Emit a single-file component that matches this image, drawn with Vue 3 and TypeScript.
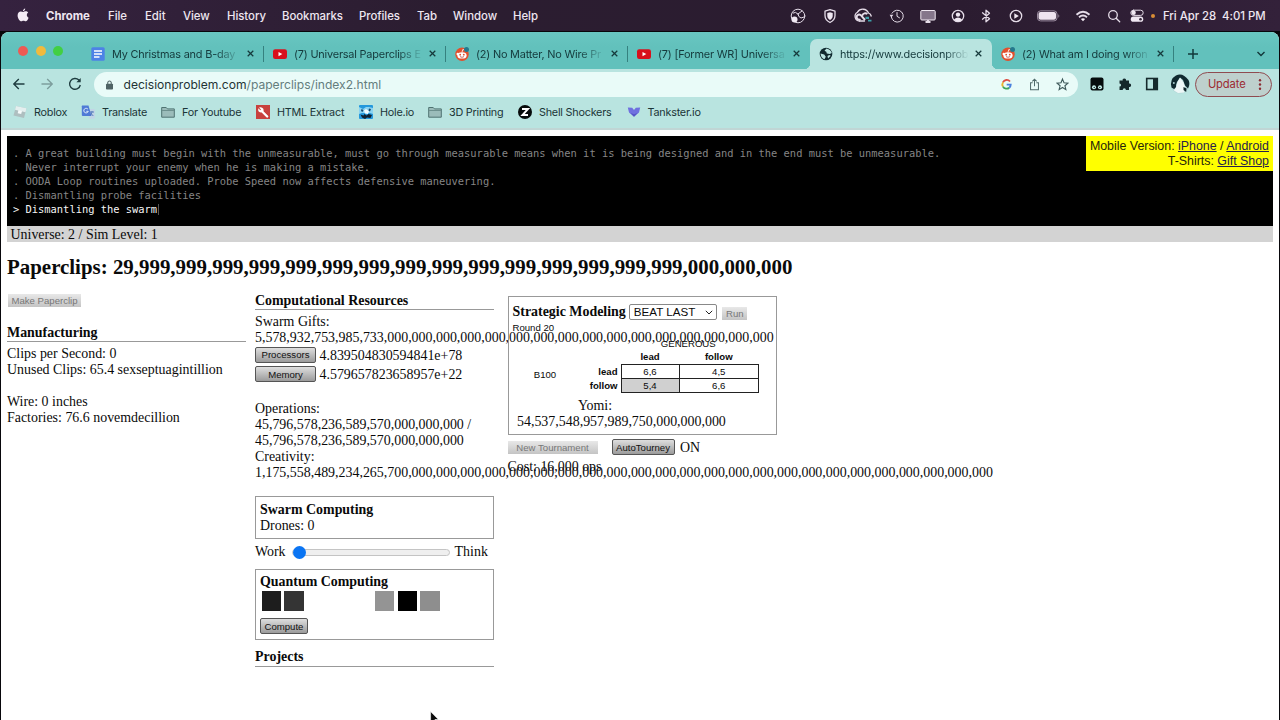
<script setup lang="ts">
interface Tab { icon: 'docs' | 'youtube' | 'reddit' | 'globe'; title: string; active?: boolean }
interface Bookmark { icon: string; label: string; cls: string }

const menus: string[] = ['Chrome', 'File', 'Edit', 'View', 'History', 'Bookmarks', 'Profiles', 'Tab', 'Window', 'Help']

const tabs: Tab[] = [
  { icon: 'docs', title: 'My Christmas and B-day' },
  { icon: 'youtube', title: '(7) Universal Paperclips E' },
  { icon: 'reddit', title: '(2) No Matter, No Wire Pr' },
  { icon: 'youtube', title: '(7) [Former WR] Universa' },
  { icon: 'globe', title: 'https://www.decisionprob', active: true },
  { icon: 'reddit', title: '(2) What am I doing wron' },
]

const bookmarks: Bookmark[] = [
  { icon: 'roblox', label: 'Roblox', cls: 'b1' },
  { icon: 'translate', label: 'Translate', cls: 'b2' },
  { icon: 'folder', label: 'For Youtube', cls: 'b3' },
  { icon: 'wrench', label: 'HTML Extract', cls: 'b4' },
  { icon: 'hole', label: 'Hole.io', cls: 'b5' },
  { icon: 'folder', label: '3D Printing', cls: 'b6' },
  { icon: 'zed', label: 'Shell Shockers', cls: 'b7' },
  { icon: 'tank', label: 'Tankster.io', cls: 'b8' },
]

const log: string[] = [
  'A great building must begin with the unmeasurable, must go through measurable means when it is being designed and in the end must be unmeasurable.',
  'Never interrupt your enemy when he is making a mistake.',
  'OODA Loop routines uploaded. Probe Speed now affects defensive maneuvering.',
  'Dismantling probe facilities',
]

const clips = '29' + ',999'.repeat(15) + ',000'.repeat(3)
const gifts = '5,578,932,753,985,733' + ',000'.repeat(16)
const creativity = '1,175,558,489,234,265,700' + ',000'.repeat(24)
const ops = '45,796,578,236,589,570,000,000,000'
const chips: string[] = ['c1', 'c2', 'blank', 'blank', 'blank', 'c3', 'c4', 'c5']
</script>

<template>
  <div class="screen">
    <header class="menubar">
      <svg class="apple" viewBox="0 0 12 14"><path d="M8.2 0.4C8.3 1.7 7.2 3 6 3 5.900 1.700 7 .6 8.200.4zM6.200 3.900C6.900 3.900 7.600 3.300 8.700 3.300c1 0 1.900.5 2.500 1.300-2 1.200-1.700 4.200.4 5.100C11 11.500 9.900 13.200 8.700 13.200c-.9 0-1.200-.5-2.200-.5s-1.400.5-2.200.5C2.700 13.200.6 10.200.6 7.400c0-2.600 1.600-4 3.200-4 1 0 1.800.5 2.400.5z" /></svg>
      <nav class="menus"><span v-for="m in menus" :key="m" :class="{ app: m === 'Chrome' }">{{ m }}</span></nav>
      <div class="status">
        <svg viewBox="0 0 16 16"><circle cx="8" cy="8" r="6.800" class="ln" /><path class="ln" d="M3 5q2.500-2 5 1M8 6l4-3M8 6q0 3 3 4l3-1" /><circle cx="4.500" cy="11.500" r="3" fill="#f0e8f2" /></svg>
        <svg viewBox="0 0 16 16"><path class="ln thick" d="M8 1.600l5 1.600v4.300c0 3.200-2 5.500-5 7-3-1.500-5-3.800-5-7V3.200z" /><path fill="#f0e8f2" d="M8 4.200l2.700.8v3c0 1.600-1.100 3-2.700 4-1.600-1-2.700-2.400-2.700-4V5z" /></svg>
        <svg class="wide" viewBox="0 0 20 16"><path class="ln thick" d="M6.500 13A4.700 4.700 0 0 1 4.500 4.200 6.200 6.200 0 0 1 15.500 5a4 4 0 0 1 2.700 3" /><path class="ln fat" d="M12 12L7.800 7.200a2.500 2.500 0 1 0-.3 4M9.300 7.500a3 3 0 0 1 5-1.300" /><path class="ln thick" d="M6.500 13h5" /><path d="M12.500 8.800h3.500v2.200h-3.500zM15 11.700h3.500v1.800H15z" fill="#3e9fa9" /></svg>
        <svg viewBox="0 0 16 16"><path class="ln" d="M3 5.200A6 6 0 1 1 2.300 9M8 4.500V8.300l2.500 1.500" /><path d="M.6 6.800h3.800L2.300 9.500z" fill="#e5d9e8" /></svg>
        <svg viewBox="0 0 16 16"><rect x=".8" y="2.500" width="14.400" height="9.500" rx="1" fill="#85768b" stroke="#f0e8f2" /><path d="M5.500 14h5M8 12v2" class="ln fat" /></svg>
        <svg viewBox="0 0 16 16"><circle cx="8" cy="8" r="5.700" class="ln thick" /><circle cx="8" cy="6.600" r="2.200" fill="#f0e8f2" /><path fill="#f0e8f2" d="M4 11.500q4-4 8 0-1.500 2-4 2t-4-2z" /></svg>
        <svg viewBox="0 0 16 16"><path class="ln thick" d="M4.500 4.800l7 6L8 13.800V2.200l3.500 3-7 6" /></svg>
        <svg viewBox="0 0 16 16"><circle cx="8" cy="8" r="5.700" class="ln thick" /><path fill="#f0e8f2" d="M6.300 5.200L10.800 8 6.300 10.800z" /></svg>
        <svg class="batt" viewBox="0 0 23 12"><rect x=".5" y=".9" width="19.500" height="10" rx="3" fill="none" stroke="#9b8ca0" /><rect x="1.500" y="2" width="17.500" height="7.800" rx="2" fill="#eee3ef" /><path d="M21.300 4.300v3.400q1-.5 1-1.700t-1-1.700z" fill="#8e8093" /></svg>
        <svg viewBox="0 0 16 16"><path class="ln fat" d="M1.500 6.700Q8 1 14.500 6.700M4 9.200Q8 6 12 9.200" /><path fill="#f5edf6" d="M5.900 11.100q2.100-1.500 4.200 0L8 13.300z" /></svg>
        <svg viewBox="0 0 16 16"><circle cx="7" cy="7" r="4.300" class="ln thick" /><path class="ln thick" d="M10.200 10.200l3.500 3.500" /></svg>
        <svg viewBox="0 0 16 16"><rect x="1.800" y="2.200" width="12.400" height="5.200" rx="2.600" class="ln" /><circle cx="4.600" cy="4.800" r="2.200" fill="#f0e8f2" /><rect x="1.800" y="8.600" width="12.400" height="5.200" rx="2.600" fill="#f0e8f2" /><circle cx="11.500" cy="11.200" r="1.300" fill="#35263b" /></svg>
        <i class="dot"></i>
        <span class="clock">Fri Apr 28&nbsp; 4:01 PM</span>
      </div>
    </header>

    <div class="window">
      <div class="tabstrip">
        <div class="lights"><i></i><i></i><i></i></div>
        <div v-for="t in tabs" :key="t.title" class="tab" :class="{ active: t.active }">
          <svg v-if="t.icon === 'docs'" class="fav" viewBox="0 0 14 14"><rect x=".3" y=".3" width="13.400" height="13.400" rx="1.500" fill="#4d82e6" /><path d="M3 4h8M3 7h8M3 10h5.500" stroke="#fff" stroke-width="1.500" /></svg>
          <svg v-else-if="t.icon === 'youtube'" class="fav" viewBox="0 0 14 14"><rect y="2.200" width="14" height="9.800" rx="2.200" fill="#d8101c" /><path d="M5.500 4.900v4.400L9.300 7.100z" fill="#fff" /></svg>
          <svg v-else-if="t.icon === 'reddit'" class="fav" viewBox="0 0 14 14"><circle cx="7" cy="7.200" r="6.700" fill="#e2502d" /><ellipse cx="7" cy="8.400" rx="4.600" ry="3.200" fill="#fff" /><circle cx="2.700" cy="7" r="1.200" fill="#fff" /><path d="M7 5.200L7.800 2.500l2 .5" stroke="#fff" stroke-width=".8" fill="none" /><circle cx="5.200" cy="7.700" r=".9" fill="#e2502d" /><circle cx="8.800" cy="7.700" r=".9" fill="#e2502d" /><path d="M5 9.600q2 1.400 4 0" stroke="#a33" stroke-width=".7" fill="none" /><circle cx="11.500" cy="2.500" r="2.500" fill="#24798d" /></svg>
          <svg v-else class="fav" viewBox="0 0 14 14"><circle cx="7" cy="7" r="6.300" fill="#10292e" /><path d="M1.500 6.500l3.700 1 1.600 2.200-1.300 2.500Q2 11 1.500 6.500zM7.500 1.500l-2 2.300 1.800 1 .5 1.800 3 .3 2-.8Q12 2.500 7.500 1.500zM9 11.500l2.800-2.700-1.500-.8-1.800 1z" fill="#b9e4e0" /></svg>
          <span class="title">{{ t.title }}</span>
          <svg class="x" viewBox="0 0 8 8"><path d="M.8.8l6.400 6.400M7.200.8L.8 7.200" /></svg>
        </div>
        <svg class="plus" viewBox="0 0 12 12"><path d="M6 1v10M1 6h10" /></svg>
        <svg class="chev" viewBox="0 0 10 6"><path d="M1.500 1L5 4.500 8.500 1" /></svg>
      </div>

      <div class="toolbar">
        <svg class="nav" viewBox="0 0 14 14"><path d="M12.500 7H2M6.800 2L1.800 7l5 5" /></svg>
        <svg class="nav dim" viewBox="0 0 14 14"><path d="M1.500 7H12M7.200 2l5 5-5 5" /></svg>
        <svg class="nav" viewBox="0 0 14 14"><path d="M12.300 8A5.400 5.400 0 1 1 10.900 3.100L12 4.200" /><path d="M12.700 1v4.300H8.400z" fill="#1f3d40" stroke="none" /></svg>
        <div class="omnibox">
          <svg class="lock" viewBox="0 0 8 11"><rect y="4" width="8" height="6.500" rx="1" fill="#4f6365" /><path d="M2 4.500V3a2 2 0 0 1 4 0v1.500" fill="none" stroke="#4f6365" stroke-width="1.200" /></svg>
          <span class="url">decisionproblem.com<em>/paperclips/index2.html</em></span>
          <svg class="g" viewBox="0 0 12 12"><g fill="none" stroke-width="2"><path d="M9.800 2.700A4.600 4.600 0 0 0 2.100 3.700" stroke="#dd4f43" /><path d="M2.100 3.700a4.600 4.600 0 0 0 0 4.600" stroke="#e9b42d" /><path d="M2.100 8.300A4.600 4.600 0 0 0 9 9.500" stroke="#3fa45b" /><path d="M9 9.500A4.500 4.500 0 0 0 10.600 6.200H6.200" stroke="#4a80dd" /></g></svg>
          <svg class="share" viewBox="0 0 12 14"><path d="M4 5H1.700v7.800h8.600V5H8M6 9V1.200M3.600 3.500L6 1.200l2.400 2.300" /></svg>
          <svg class="star" viewBox="0 0 14 14"><path d="M7 1.200l1.600 4 4.200.3-3.200 2.800 1 4.200L7 10.200l-3.600 2.300 1-4.200L1.200 5.500l4.200-.3z" /></svg>
        </div>
        <svg class="ext first" viewBox="0 0 14 14"><rect x=".5" y=".5" width="13" height="13" rx="2" fill="#060c0d" /><circle cx="4" cy="10.200" r="2" fill="#c6eeea" /><circle cx="10" cy="10.200" r="2" fill="#c6eeea" /><circle cx="4.200" cy="10.500" r=".7" fill="#101c1e" /><circle cx="9.800" cy="10.500" r=".7" fill="#101c1e" /></svg>
        <svg class="ext" viewBox="0 0 14 14"><path fill="#14282b" d="M1.500 3.500h3.200a1.700 1.700 0 1 1 3.300 0h3V6.600a1.700 1.700 0 1 1 0 3.300v3H7.900a1.600 1.600 0 1 0-3.200 0H1.500V9.600a1.600 1.600 0 1 0 0-3.200z" /></svg>
        <svg class="ext" viewBox="0 0 14 14"><rect x="1.700" y="1.500" width="10.600" height="11" fill="none" stroke="#162a2d" stroke-width="1.600" /><path d="M8 1.500h4.300v11H8z" fill="#162a2d" /></svg>
        <svg class="avatar" viewBox="0 0 20 20"><circle cx="10" cy="10" r="9.500" fill="#b4d8d8" /><path d="M1.500 13.500Q-.5 5 6 1.500T18.500 6q2 4-.5 8.500l-3-3L13 6l-3-2.500L7 8l-1 3 .3 2.500L4 15z" fill="#102a30" /><path d="M10 3.800l3.500 4.700 1.500 4.500-1 5.500-6 .5-4-2.500 2.500-4.500L7.500 8z" fill="#edf7f7" /><path d="M13.500 13l3 1.500-.3 3.500-2.700-2z" fill="#10262b" /><circle cx="3.800" cy="9" r="1" fill="#a9cfd0" /></svg>
        <div class="update"><span>Update</span><svg viewBox="0 0 4 14"><circle cx="2" cy="2.500" r="1.300" /><circle cx="2" cy="7" r="1.300" /><circle cx="2" cy="11.500" r="1.300" /></svg></div>
      </div>

      <div class="bookmarks">
        <div v-for="b in bookmarks" :key="b.label" class="bm" :class="b.cls">
          <svg v-if="b.icon === 'roblox'" viewBox="0 0 14 14"><path d="M3 1l10.500 2.300L11 13 .5 10.500z" fill="#aebfc0" /><path d="M3 1l10.500 2.300-1 4L2 4.800z" fill="#e4efef" /><path d="M5.500 5l3.500 1-.8 3-3.500-.8z" fill="#f6fbfb" /></svg>
          <svg v-else-if="b.icon === 'translate'" viewBox="0 0 14 14"><path d="M6 4h7q.8 0 .8.800V13q0 .8-.8.800H8.500z" fill="#c2d5e6" /><path d="M1 .5h6.500L10.500 11H1.800Q.8 11 .8 10V1.300z" fill="#4f7ad6" /><path d="M7 4.300a2.300 2.300 0 1 0 .3 2H5.300" stroke="#dce9fa" fill="none" /><path d="M9 7h4M11 6v1q-.5 2.500-2 3.500M10 8.500l2.300 2.500" stroke="#5176b9" stroke-width=".9" fill="none" /></svg>
          <svg v-else-if="b.icon === 'folder'" viewBox="0 0 14 14"><path d="M.7 2.500h4.500l1.300 1.400h6.800v8.300H.7z" fill="#9bbcba" stroke="#4f7372" /><path d="M1 5.500h12" stroke="#6d908e" /></svg>
          <svg v-else-if="b.icon === 'wrench'" viewBox="0 0 14 14"><rect width="14" height="14" fill="#c8413e" /><path d="M6.200 6.500l5 5" stroke="#fff" stroke-width="2.300" stroke-linecap="round" /><path d="M3 2.500l2 2-.7.800-2-2Q1.500 7 4.800 7.400 8.600 7 7.300 3.700 5.800 1.400 3 2.500z" fill="#fff" /></svg>
          <svg v-else-if="b.icon === 'hole'" viewBox="0 0 14 14"><rect width="14" height="14" rx="1" fill="#2498dc" /><path d="M0 2l4 2 3-2h3l4 1v6l-3-1-8 0-3 1z" fill="#8ad4f3" /><path d="M1.500 9.500l3 1 1-1.500 2 1.500 2-1.500 3.500 1-1.500 3-3.500-.5-2 1.500-3-1.500z" fill="#102233" /><path d="M5 5.500l2-1.500 3 2-1 3-3-.5z" fill="#f2fbff" /><path d="M2.500 4l2 1-1 2-1.500-1zM10 3.500l2 .5-1 2.500-1.500-1z" fill="#1a4a70" /></svg>
          <svg v-else-if="b.icon === 'zed'" viewBox="0 0 14 14"><circle cx="7" cy="7" r="7" fill="#070b0b" /><path d="M4 4h6L4.500 10H10" stroke="#fff" stroke-width="1.900" fill="none" /></svg>
          <svg v-else viewBox="0 0 14 14"><path d="M.8 2.500l4.400.3L7 5l1.800-2.200 4.400-.3L12 7.500 7 11.800 2 7.500z" fill="#6f70df" /><path d="M3.500 8L7 9.300 10.500 8 7 11.800z" fill="#5655c4" /></svg>
          <span>{{ b.label }}</span>
        </div>
      </div>

      <main class="page">
        <section class="console">
          <div class="log">
            <p v-for="l in log" :key="l">. {{ l }}</p>
            <p class="now">&gt; Dismantling the swarm<i></i></p>
          </div>
          <div class="links">Mobile Version: <u>iPhone</u> / <u>Android</u><br />T-Shirts: <u>Gift Shop</u></div>
        </section>
        <div class="universe">Universe: 2 / Sim Level: 1</div>
        <h1>Paperclips: {{ clips }}</h1>
        <div class="cols">
          <section class="left">
            <button class="btn off make">Make Paperclip</button>
            <h2>Manufacturing</h2>
            <p>Clips per Second: 0</p>
            <p>Unused Clips: 65.4 sexseptuagintillion</p>
            <p>&nbsp;</p>
            <p>Wire: 0 inches</p>
            <p>Factories: 76.6 novemdecillion</p>
          </section>
          <section class="mid">
            <h2>Computational Resources</h2>
            <p>Swarm Gifts:</p>
            <p>{{ gifts }}</p>
            <div class="row"><button class="btn">Processors</button><span>4.839504830594841e+78</span></div>
            <div class="row"><button class="btn">Memory</button><span>4.579657823658957e+22</span></div>
            <div class="ops">
              <p>Operations:</p>
              <p>{{ ops }} /</p>
              <p>{{ ops }}</p>
              <p>Creativity:</p>
              <p>{{ creativity }}</p>
            </div>
            <div class="box swarm"><h3>Swarm Computing</h3><p>Drones: 0</p></div>
            <div class="slider"><span>Work</span><div class="track"><i></i></div><span>Think</span></div>
            <div class="box quantum">
              <h3>Quantum Computing</h3>
              <div class="chips"><i v-for="(c, i) in chips" :key="i" :class="c"></i></div>
              <button class="btn compute">Compute</button>
            </div>
            <h2 class="projects">Projects</h2>
          </section>
          <section class="right">
            <div class="box model">
              <div class="pick">
                <h3>Strategic Modeling</h3>
                <div class="select"><span>BEAT LAST</span><svg viewBox="0 0 8 5"><path d="M.8.8L4 4 7.200.8" /></svg></div>
                <button class="btn off run">Run</button>
              </div>
              <div class="round">Round 20</div>
              <div class="payoff">
                <span class="b100">B100</span>
                <div class="grid">
                  <span class="gen">GENEROUS</span>
                  <i></i><b>lead</b><b>follow</b>
                  <b class="side">lead</b><span class="cell">6,6</span><span class="cell">4,5</span>
                  <b class="side">follow</b><span class="cell hit">5,4</span><span class="cell">6,6</span>
                </div>
              </div>
              <p class="yomi">Yomi:</p>
              <p class="yomi-n">54,537,548,957,989,750,000,000,000</p>
            </div>
            <div class="tourney"><button class="btn off new">New Tournament</button><button class="btn auto">AutoTourney</button><span>ON</span></div>
            <p class="cost">Cost: 16,000 ops</p>
          </section>
        </div>
      </main>
    </div>
    <svg class="cursor" viewBox="0 0 9 13"><path d="M.6.6v10.800l2.500-2.300 1.700 3.700 1.700-.8-1.600-3.500h3.500z" fill="#0a0a0a" stroke="#fff" stroke-width=".6" /></svg>
  </div>
</template>

<style>
html, body { margin: 0; background: #150d1b; overflow: hidden; }
</style>

<style scoped>
.screen { position: relative; width: 1280px; height: 720px; overflow: hidden; background: #08070b; font-family: Inter, Roboto, sans-serif; }
.screen * { box-sizing: border-box; }
svg { display: block; flex: none; overflow: visible; }
p, h1, h2, h3 { margin: 0; white-space: nowrap; }
.menubar { display: flex; align-items: center; height: 31px; background: linear-gradient(90deg, #35223f, #2b1d30 35%, #2b1c30 75%, #33213a); color: #eee6f0; }
.apple { width: 12px; height: 14px; margin: 0 0 1px 17px; fill: #f4ecf5; }
.menus { display: grid; grid-template-columns: 62px 37px 38px 44px 55px 77px 58px 36px 60px 40px; margin-left: 17px; font-size: 11.400px; letter-spacing: -.05px; font-weight: 500; white-space: nowrap; }
.menus .app { font-weight: 700; }
.status { display: grid; grid-template-columns: 32px 32px 34px 33px 30px 29px 28px 31px 35px 34px 27px 20px 7px auto; align-items: center; justify-items: center; margin-left: 229px; }
.status svg { width: 16px; height: 16px; }
.status .wide { width: 20px; }
.status .batt { width: 23px; height: 12px; }
.ln { fill: none; stroke: #e5dce8; stroke-width: 1; stroke-linecap: round; stroke-linejoin: round; }
.thick { stroke-width: 1.300; }
.fat { stroke-width: 1.900; stroke-linecap: butt; }
.dot { width: 4px; height: 4px; border-radius: 50%; background: #d98d35; margin-left: 4px; }
.clock { font-size: 11.400px; font-weight: 500; margin-left: 9px; white-space: nowrap; letter-spacing: -.05px; }

.window { width: 1278px; height: 688px; margin: 1px 0 0 1px; border-radius: 8px 8px 0 0; overflow: hidden; background: #fff; }
.tabstrip { display: flex; height: 37px; padding-top: 7px; background: linear-gradient(#69c7c1, #62c1bc 40%); }
.lights { display: flex; gap: 7.500px; width: 80.500px; padding: 7px 0 0 17px; }
.lights i { width: 10px; height: 10px; border-radius: 50%; background: #ed5a54; }
.lights i:nth-child(2) { background: #f0ba3d; }
.lights i:nth-child(3) { background: #42cf43; }
.tab { display: flex; align-items: center; position: relative; width: 182px; height: 30px; padding: 0 9px 1px 9.500px; }
.tab:not(.active)::after { content: ''; position: absolute; right: 0; top: 7px; height: 16px; width: 1px; background: #35817f; }
.tab:nth-child(5)::after { display: none; }
.active { background: #b9e4e0; border-radius: 7px 7px 0 0; }
.active::before { content: ''; position: absolute; left: -6px; right: -6px; bottom: 0; height: 6px; background: radial-gradient(circle at 0 0, transparent 6px, #b9e4e0 6.500px) left / 6px 6px no-repeat, radial-gradient(circle at 100% 0, transparent 6px, #b9e4e0 6.500px) right / 6px 6px no-repeat; }
.fav { width: 14px; height: 14px; }
.title { width: 128px; margin-left: 7px; white-space: nowrap; font-size: 10.900px; letter-spacing: -.19px; line-height: 18px; color: #14393b; -webkit-mask-image: linear-gradient(90deg, #000 104px, transparent 129px); mask-image: linear-gradient(90deg, #000 104px, transparent 129px); }
.x { width: 7px; height: 7px; margin-left: 6.500px; fill: none; stroke: #163a3c; stroke-width: 1.400; }
.plus { width: 12px; height: 12px; margin: 9px 0 0 13px; fill: none; stroke: #12383a; stroke-width: 1.500; }
.chev { width: 10px; height: 6px; margin: 12px 0 0 57px; fill: none; stroke: #12383a; stroke-width: 1.400; }
.toolbar { display: flex; align-items: center; height: 30px; padding-left: 11px; background: #b9e4e0; }
.nav { width: 14px; height: 14px; margin-right: 14px; fill: none; stroke: #1f3d40; stroke-width: 1.400; }
.dim { stroke: #7d9e9d; }
.omnibox { display: flex; align-items: center; width: 984px; height: 25px; margin: 1px 0 0 -2px; padding-left: 12px; border-radius: 13px; background: #e9fbf8; }
.lock { width: 7px; height: 10px; }
.url { width: 882px; margin-left: 10.500px; font-size: 12.080px; color: #1f3335; }
.url em { font-style: normal; color: #647d7d; }
.g { width: 11px; height: 11px; margin-right: 17px; margin-left: -5px; }
.share { width: 11px; height: 13px; margin-right: 16px; fill: none; stroke: #506a6a; stroke-width: 1.100; }
.star { width: 13px; height: 13px; fill: none; stroke: #3e595a; stroke-width: 1.200; }
.ext { width: 14px; height: 14px; margin: 0 0 0 13.700px; }
.ext.first { margin-left: 12px; }
.avatar { width: 20px; height: 20px; margin-left: 11px; }
.update { display: flex; align-items: center; width: 77px; height: 25px; margin-left: 5px; padding-left: 11.500px; border: 1px solid #8f4b50; border-radius: 13px; background: #bed0cd; color: #9c2a32; font-size: 11.200px; letter-spacing: -.1px; }
.update span { width: 47px; }
.update svg { width: 4px; height: 13px; margin-left: 3.500px; fill: #8b2d34; }
.bookmarks { display: flex; height: 31px; padding: 0 0 3px 12px; background: #b9e4e0; border-bottom: 2px solid #c0d6d5; }
.bm { display: flex; align-items: center; gap: 7px; font-size: 10.800px; letter-spacing: -.22px; color: #1b3537; white-space: nowrap; }
.bm svg { width: 14px; height: 14px; }
.b1 { width: 68px; } .b2 { width: 80px; } .b3 { width: 95px; } .b4 { width: 103px; } .b5 { width: 69px; } .b6 { width: 90px; } .b7 { width: 108.500px; }

.page { height: 590px; padding: 6px 6px 0 6px; background: #fff; color: #0a0a0a; font: 13.930px/16.050px "Liberation Serif", serif; }
.console { display: flex; justify-content: space-between; height: 90px; background: #000; }
.log { padding: 11px 0 0 6px; font: 10.425px/13.900px "DejaVu Sans Mono", monospace; color: #858585; }
.log .now { display: flex; color: #f5f5f5; }
.now i { width: 1px; height: 11px; margin: 1px 0 0 1px; background: #555; }
.links { width: 187px; height: 35px; padding: 3px 4px 0 0; background: #ffff00; text-align: right; font: 12.400px/14.600px "Liberation Sans", sans-serif; color: #26260a; white-space: nowrap; }
.links u { color: #26234c; }
.universe { height: 16px; padding-left: 3.500px; line-height: 18.500px; background: #d3d3d3; }
h1 { height: 54px; font-size: 20.910px; line-height: 50px; }
h2, h3 { font-size: 13.930px; line-height: 16px; }
.cols { display: grid; grid-template-columns: 239px 239px 270px; column-gap: 9px; height: 380px; }
.cols > section { min-width: 0; }
.right { padding-left: 4.500px; }
h2 { height: 17.500px; border-bottom: 1px solid #999; margin-bottom: 4px; }
.btn { display: block; padding: 0; border: 1px solid #555; border-radius: 2px; background: linear-gradient(#dedede, #9b9b9b); color: #111; font: 9.600px/13px "Liberation Sans", sans-serif; text-align: center; white-space: nowrap; }
.off { border: 0; border-radius: 0; background: linear-gradient(#e8e8e8, #c4c4c4); color: #777; }
.make { width: 73px; height: 13px; margin: -2px 0 17.500px 1px; }
.left h2 { height: 17.500px; margin-bottom: 4px; }
.mid h2 { height: 17px; margin-top: -3px; }
.row { display: flex; align-items: center; height: 19.300px; gap: 3.500px; }
.row .btn { width: 61px; height: 16px; margin-bottom: 1.500px; }
.ops { margin-top: 16px; }
.box { border: 1px solid #999; }
.swarm { height: 43px; margin-top: 15.200px; padding: 5px 0 0 4px; }
.slider { display: flex; align-items: center; height: 16px; margin: 5px 0 9px; }
.track { position: relative; width: 158px; height: 7px; margin: 0 5px 0 6px; border: 1px solid #c4c4c4; border-radius: 4px; background: #efefef; }
.track i { position: absolute; left: 0; top: -4px; width: 13px; height: 13px; border-radius: 50%; background: #0b75f3; }
.quantum { height: 71px; padding: 4px 0 0 4px; }
.chips { display: flex; gap: 3.200px; height: 20px; margin: 1px 0 7px 1.500px; }
.chips i { width: 19.500px; height: 19.600px; }
.c1 { background: #1d1d1d; } .c2 { background: #343434; } .c3 { background: #949494; } .c4 { background: #000; } .c5 { background: #8e8e8e; }
.compute { width: 48px; height: 16px; }
.mid .projects { margin-top: 9px; height: 17.500px; }
.model { width: 269.500px; height: 139px; padding: 7px 0 0 4px; }
.pick { display: flex; align-items: center; height: 16px; }
.pick h3 { margin-top: -1px; }
.select { display: flex; align-items: center; justify-content: space-between; width: 88px; height: 16px; margin: 0 5px 0 3.500px; padding: 0 3px 0 3.500px; border: 1px solid #888; border-radius: 2px; font: 11.600px/14px "Liberation Sans", sans-serif; white-space: nowrap; }
.select svg { width: 8px; height: 5px; fill: none; stroke: #222; }
.run { width: 25px; height: 13px; margin-top: 2px; }
.round { height: 11px; margin-top: 2px; font: 9.600px/11px "Liberation Sans", sans-serif; }
.payoff { display: flex; align-items: center; height: 60px; margin-top: 4px; font: 9.600px/14px "Liberation Sans", sans-serif; }
.b100 { width: 65px; padding: 24.500px 0 9.500px; text-align: center; }
.grid { display: grid; grid-template-columns: 45px 58px 79.500px; grid-template-rows: 13px 13.500px 14.400px 14.400px; text-align: center; align-self: flex-start; }
.b100 + .grid { margin-left: -1px; }
.gen { grid-column: 2 / 4; margin-left: -4px; }
.grid b { font-size: 9.600px; margin-left: -1px; line-height: 13.500px; }
.grid .side { text-align: right; padding-right: 4px; margin-left: 0; line-height: 15px; }
.cell { border: 1px solid #222; margin: 0 0 -1px -1px; line-height: 13.500px; }
.hit { background: #d0d0d0; }
.yomi { width: 165px; text-align: center; margin-top: 1px; }
.yomi-n { padding-left: 4.500px; }
.tourney { display: flex; align-items: center; height: 16px; margin-top: 4px; }
.tourney span { padding-top: 3px; }
.new { width: 90px; height: 13px; }
.auto { width: 63px; height: 16px; margin: 0 5.500px 0 14px; }
.cost { margin-top: 4px; }
.cursor { position: absolute; left: 430px; top: 711px; width: 9px; height: 13px; }
</style>
